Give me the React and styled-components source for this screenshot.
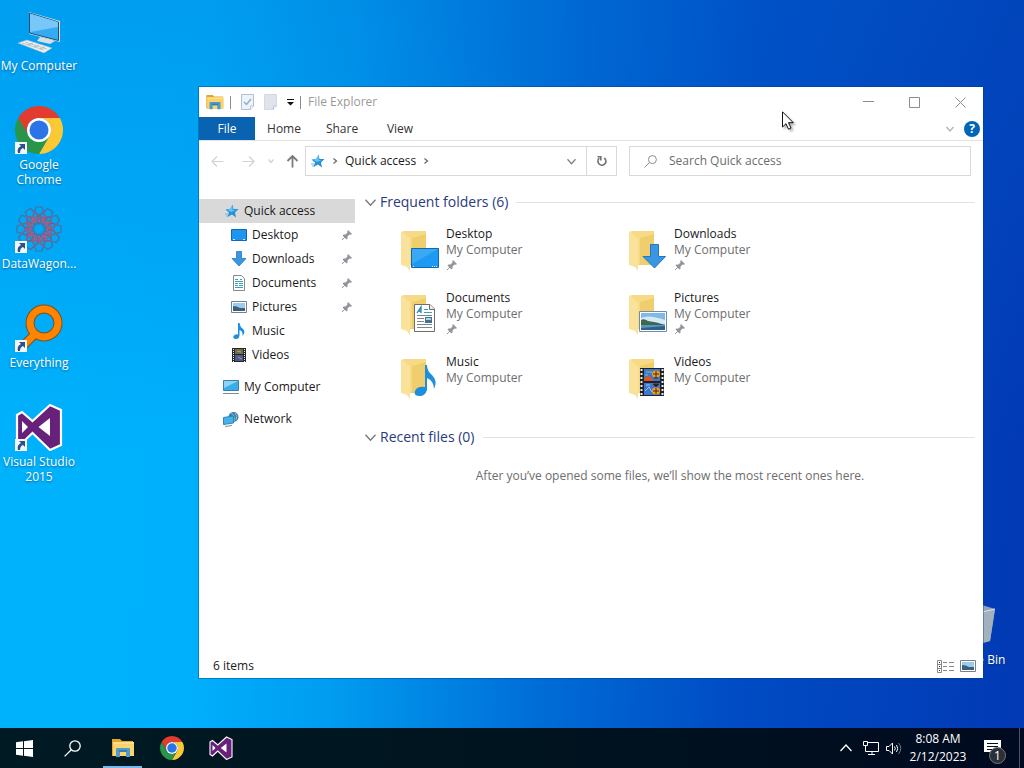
import React from 'react'
import styled, { createGlobalStyle } from 'styled-components'

const places = [
    { name: 'Desktop', pinned: true },
    { name: 'Downloads', pinned: true },
    { name: 'Documents', pinned: true },
    { name: 'Pictures', pinned: true },
    { name: 'Music', pinned: false },
    { name: 'Videos', pinned: false },
]

const shortcuts = [
    { name: 'My Computer', icon: <ComputerIcon /> },
    { name: 'Google Chrome', icon: <ChromeIcon />, link: true },
    { name: 'DataWagon...', icon: <WagonIcon />, link: true },
    { name: 'Everything', icon: <EverythingIcon />, link: true },
    { name: 'Visual Studio 2015', icon: <StudioIcon />, link: true },
]

export default function App() {
    return (
        <Screen>
            <GlobalStyle />
            <Desktop>
                <Shortcuts>
                    {shortcuts.map((s) => (
                        <Shortcut key={s.name}>
                            <ShortcutArt>
                                {s.icon}
                                {s.link && <LinkBadge><ArrowIcon /></LinkBadge>}
                            </ShortcutArt>
                            <span>{s.name}</span>
                        </Shortcut>
                    ))}
                </Shortcuts>
                <Bin>
                    <ShortcutArt><BinIcon /></ShortcutArt>
                    <span>Recycle Bin</span>
                </Bin>
                <Explorer />
                <Pointer><PointerIcon /></Pointer>
            </Desktop>
            <Taskbar />
        </Screen>
    )
}

function Explorer() {
    return (
        <Window>
            <TitleBar>
                <ExplorerIcon width="18" height="15" />
                <Divider />
                <PlainButton aria-label="Properties"><SheetIcon checked /></PlainButton>
                <PlainButton aria-label="New folder"><SheetIcon /></PlainButton>
                <PlainButton aria-label="Customize"><CustomizeIcon /></PlainButton>
                <Divider />
                <Title>File Explorer</Title>
                <Controls>
                    <Control aria-label="Minimize"><Line d="M0 4.5H11" /></Control>
                    <Control aria-label="Maximize"><Line d="M.5 .5H10.5V10.5H.5Z" /></Control>
                    <Control aria-label="Close"><Line d="M.5 .5L10.5 10.5M10.5 .5L.5 10.5" /></Control>
                </Controls>
            </TitleBar>
            <Ribbon>
                <FileTab>File</FileTab>
                <Tab>Home</Tab>
                <Tab>Share</Tab>
                <Tab>View</Tab>
                <RibbonEnd>
                    <PlainButton aria-label="Expand ribbon"><Chevron size={8} color="#b4b4b4" weight={1} /></PlainButton>
                    <Help aria-label="Help">?</Help>
                </RibbonEnd>
            </Ribbon>
            <AddressRow>
                <History>
                    <PlainButton aria-label="Back"><NavArrow color="#d2d2d2" /></PlainButton>
                    <ForwardButton aria-label="Forward"><NavArrow color="#d2d2d2" turn={180} /></ForwardButton>
                    <PlainButton aria-label="Recent"><Chevron size={6} color="#d2d2d2" weight={1} /></PlainButton>
                    <PlainButton aria-label="Up"><NavArrow color="#7a7a7a" turn={90} bold /></PlainButton>
                </History>
                <Address>
                    <StarIcon />
                    <Crumb><Chevron size={6} color="#6a6a6a" weight={1} turn={-90} /></Crumb>
                    <PlainButton>Quick access</PlainButton>
                    <Crumb><Chevron size={6} color="#6a6a6a" weight={1} turn={-90} /></Crumb>
                    <Drop aria-label="Previous locations"><Chevron size={9} color="#808080" weight={1} /></Drop>
                    <Refresh aria-label="Refresh"><RefreshIcon /></Refresh>
                </Address>
                <Search>
                    <LensIcon size={13} color="#8a8a8a" />
                    <input type="text" aria-label="Search Quick access" placeholder="Search Quick access" />
                </Search>
            </AddressRow>
            <Body>
                <Tree aria-label="Folders">
                    <Branch $active><StarIcon />Quick access</Branch>
                    {places.map((p) => (
                        <Leaf key={p.name}>
                            <SmallIcon name={p.name} />
                            <span>{p.name}</span>
                            {p.pinned && <PinIcon />}
                        </Leaf>
                    ))}
                    <Branch $spaced><MonitorIcon />My Computer</Branch>
                    <Branch $spaced><NetworkIcon />Network</Branch>
                </Tree>
                <Content>
                    <GroupHead>
                        <Chevron size={11} color="#777" weight={1} />
                        Frequent folders (6)
                        <Rule />
                    </GroupHead>
                    <Tiles>
                        {places.map((p) => (
                            <Tile key={p.name}>
                                <FolderIcon name={p.name} />
                                <TileText>
                                    <span>{p.name}</span>
                                    <Muted>My Computer</Muted>
                                    {p.pinned && <PinIcon />}
                                </TileText>
                            </Tile>
                        ))}
                    </Tiles>
                    <GroupHead>
                        <Chevron size={11} color="#777" weight={1} />
                        Recent files (0)
                        <Rule />
                    </GroupHead>
                    <Empty>After you’ve opened some files, we’ll show the most recent ones here.</Empty>
                </Content>
            </Body>
            <Status>
                <span>6 items</span>
                <Views>
                    <PlainButton aria-label="Details view"><DetailsIcon /></PlainButton>
                    <PlainButton aria-label="Large icons view"><SmallIcon name="Pictures" /></PlainButton>
                </Views>
            </Status>
        </Window>
    )
}

function Taskbar() {
    return (
        <Bar>
            <BarButton aria-label="Start">
                <svg width="17" height="17" viewBox="0 0 17 17" fill="#fff">
                    <path d="M0 2.3L7 1.3V8H0ZM8 1.2L17 0V8H8ZM0 9H7V15.7L0 14.7ZM8 9H17V17L8 15.8Z" />
                </svg>
            </BarButton>
            <BarButton aria-label="Search"><LensIcon size={17} color="#fff" /></BarButton>
            <Apps>
                <AppButton aria-label="File Explorer" $open><ExplorerIcon width="22" height="19" /></AppButton>
                <AppButton aria-label="Google Chrome"><ChromeIcon size={24} /></AppButton>
                <AppButton aria-label="Visual Studio 2015"><StudioIcon size={24} /></AppButton>
            </Apps>
            <Tray>
                <TrayButton aria-label="Show hidden icons"><Chevron size={12} color="#fff" weight={1} turn={180} /></TrayButton>
                <TrayButton aria-label="Network">
                    <svg width="17" height="14" viewBox="0 0 17 14" fill="none" stroke="#fff">
                        <path d="M6 1.5H16.5V10.5H3.5V6M10 10.5V13M6 13.5H13M1.5 .5H5.5V4.5H1.5ZM3.5 4.5V7" />
                    </svg>
                </TrayButton>
                <TrayButton aria-label="Volume">
                    <svg width="16" height="13" viewBox="0 0 16 13" fill="none" stroke="#fff">
                        <path d="M.5 4.5H3L6.5 1V12L3 8.5H.5ZM8.5 4.5Q10 6.5 8.5 8.5M10.5 3Q13 6.5 10.5 10" />
                        <path d="M12.5 1Q17 6.5 12.5 12" stroke="#707884" />
                    </svg>
                </TrayButton>
                <Clock><span>8:08 AM</span><span>2/12/2023</span></Clock>
                <Notice aria-label="1 notification">
                    <svg width="17" height="16" viewBox="0 0 17 16">
                        <path d="M0 0H17V12H10L6 16V12H0Z" fill="#fff" />
                        <path d="M3 3.5H14M3 6.5H14M3 9.5H10" stroke="#000c1c" />
                    </svg>
                    <Count>1</Count>
                </Notice>
                <ShowDesktop aria-label="Show desktop" />
            </Tray>
        </Bar>
    )
}

/* icons */

function Line({ d }) {
    return <svg width="11" height="11" viewBox="0 0 11 11" fill="none" stroke="#8c8c8c"><path d={d} /></svg>
}

function Chevron({ size, color, weight, turn = 0 }) {
    return (
        <svg width={size} height={size} viewBox={`0 0 ${size} ${size}`} fill="none" stroke={color} strokeWidth={weight + 0.3}>
            <path d={`M.5 ${size / 4}L${size / 2} ${size * 0.75}L${size - 0.5} ${size / 4}`} transform={`rotate(${turn} ${size / 2} ${size / 2})`} />
        </svg>
    )
}

function NavArrow({ color, turn = 0, bold }) {
    return (
        <svg width="13" height="13" viewBox="0 0 13 13" fill="none" stroke={color} strokeWidth={bold ? 1.8 : 1.2}>
            <path d="M12.5 6.5H1M6 1.5L1 6.5L6 11.5" transform={`rotate(${turn} 6.5 6.5)`} />
        </svg>
    )
}

function LensIcon({ size, color }) {
    return (
        <svg width={size} height={size} viewBox="0 0 17 17" fill="none" stroke={color} strokeWidth="1.3">
            <circle cx="11" cy="6" r="5.2" /><path d="M7.3 9.7L.6 16.4" />
        </svg>
    )
}

function RefreshIcon() {
    return (
        <svg width="12" height="12" viewBox="0 0 12 12" fill="none" stroke="#707070" strokeWidth="1.6">
            <path d="M8.3 3A4 4 0 1 1 3.3 3.2" /><path d="M1.5 1.8H4.8V5.5" />
        </svg>
    )
}

function SheetIcon({ checked }) {
    return (
        <svg width="13" height="16" viewBox="0 0 13 16">
            <path d="M.5 .5H12.5V12L9.5 15.5H.5Z" fill={checked ? '#eef3f9' : '#dfe4ec'} stroke={checked ? '#b3bfce' : '#d3d9e2'} />
            <path d="M9.5 15.5V12H12.5" fill="#fff" stroke="#b9c5d4" />
            {checked && <path d="M3 8L5.5 10.5L10 5" fill="none" stroke="#8eaed2" strokeWidth="1.5" />}
        </svg>
    )
}

function CustomizeIcon() {
    return <svg width="7" height="7" viewBox="0 0 7 7"><path d="M0 0H7V1H0ZM0 3H7L3.5 6.5Z" fill="#111" /></svg>
}

function ExplorerIcon({ width, height }) {
    return (
        <svg width={width} height={height} viewBox="0 0 22 19">
            <path d="M0 0H8L10 2H21V17H0Z" fill="#e3a52b" />
            <path d="M1 3H22V17H1Z" fill="#fcd36c" />
            <path d="M1 3H22V5H1Z" fill="#ffdf8a" />
            <path d="M4 18V10Q4 9 5 9H17Q18 9 18 10V18H14V13H8V18Z" fill="#4f9bc9" />
            <path d="M7 11H15V13H7Z" fill="#387fb0" />
        </svg>
    )
}

function ComputerIcon() {
    return (
        <svg width="48" height="48" viewBox="0 0 48 48">
            <path d="M14 5L45 14V35L14 27Z" fill="#d8e2ea" />
            <path d="M14.5 6L43.5 15V33.5L14.5 26Z" fill="#35aaf5" stroke="#23506f" />
            <path d="M15 6.5L43 15V20L15 25Z" fill="#77c8f8" />
            <path d="M25 30L34 32L40 34L35 37L22 34Z" fill="#d9e0e6" />
            <path d="M3 36L12 33L37 41L29 46Z" fill="#eef2f4" stroke="#a9b6c0" strokeWidth=".6" />
            <path d="M7 36L29 43M10 35L32 42M13 38L18 36M19 40L24 38M25 42L30 40" stroke="#a1aeb8" strokeWidth=".7" />
        </svg>
    )
}

function ChromeIcon({ size = 48 }) {
    return (
        <svg width={size} height={size} viewBox="0 0 48 48">
            <path d="M3.22 12A24 24 0 0 1 44.78 12H24A12 12 0 0 0 13.61 30Z" fill="#e33b2e" />
            <path d="M44.78 12A24 24 0 0 1 24 48L34.39 30A12 12 0 0 0 24 12Z" fill="#fcc934" />
            <path d="M24 48A24 24 0 0 1 3.22 12L13.61 30A12 12 0 0 0 34.39 30Z" fill="#299548" />
            <circle cx="24" cy="24" r="12" fill="#fff" />
            <circle cx="24" cy="24" r="9.5" fill="#2a74e8" />
        </svg>
    )
}

function WagonIcon() {
    return (
        <svg width="48" height="48" viewBox="0 0 48 48" fill="none" strokeWidth="1.2">
            {[0, 30, 60, 90, 120, 150, 180, 210, 240, 270, 300, 330].map((a) => (
                <g key={a} transform={`rotate(${a} 24 24)`}>
                    <path d="M18 12L21 2H27L30 12L24 19Z" stroke="#4a6f9f" />
                    <path d="M18 6L30 14M30 6L18 14" stroke="#7a6894" />
                    <path d="M20 18L24 11L28 18" stroke="#a2608c" />
                    <circle cx="24" cy="14" r=".8" fill="#c2506f" stroke="#c2506f" />
                </g>
            ))}
        </svg>
    )
}

function EverythingIcon() {
    return (
        <svg width="48" height="48" viewBox="0 0 48 48" fill="none">
            <path d="M19 31L6 44" stroke="#7a5020" strokeWidth="9" />
            <circle cx="29" cy="19" r="14" stroke="#7a5020" strokeWidth="9" />
            <path d="M20 30L6 44" stroke="#ff8400" strokeWidth="7" />
            <circle cx="29" cy="19" r="14" stroke="#ff8400" strokeWidth="7" />
        </svg>
    )
}

function StudioIcon({ size = 48 }) {
    return (
        <svg width={size} height={size} viewBox="0 0 48 48">
            <path d="M2 12L7 9L17.5 18L35 2L46 7V42L35 47L17.5 30L7 40L2 37Z" fill="#68217a" stroke="#fff" strokeWidth="2.2" />
            <path d="M7 18L13 24L7 30ZM23.5 24L35 15V33Z" fill="#fff" />
        </svg>
    )
}

function ArrowIcon() {
    return (
        <svg width="12" height="12" viewBox="0 0 12 12">
            <path d="M4 2H10V8L8 6Q5 7 5 11H3Q1.5 6 6 4Z" fill="#2b4f8f" />
        </svg>
    )
}

function BinIcon() {
    return (
        <svg width="48" height="48" viewBox="0 0 48 48">
            <path d="M6 7L32 4L45 8L40 40L14 44Z" fill="#8fa3b8" />
            <path d="M32 11L45 8L40 40L30 43Z" fill="#a3b0bd" />
            <path d="M6 7L32 11L45 8" fill="none" stroke="#dbe6f0" />
        </svg>
    )
}

function PointerIcon() {
    return (
        <svg width="12" height="19" viewBox="0 0 12 19">
            <path d="M.5 .8V16L4 12.7L6.5 18.2L9 17L6.5 11.7H11.3Z" fill="#fff" stroke="#111" />
        </svg>
    )
}

function StarIcon() {
    return (
        <svg width="16" height="16" viewBox="0 0 16 16">
            <path d="M9.5 1.5L10.5 6L15.5 6L12 9.5L13 14.5L9 11.5L4.5 14L6 9.5L2.5 6.5L7.5 6Z" fill="#2492d6" />
            <path d="M9.5 3L9.7 7L13 7L8 9L5 7.3Z" fill="#63c3f2" />
            <path d="M2 11H5M3 13H5" stroke="#6db9e6" />
        </svg>
    )
}

function PinIcon() {
    return (
        <svg width="12" height="12" viewBox="0 0 12 12">
            <path d="M7 1L11 5L10 5.7L8.5 5.5L6.5 7.5V9.5L5.5 10.5L1.5 6.5L2.5 5.5H4.5L6.5 3.5L6.3 2Z" fill="#8f959a" />
            <path d="M4 8L1 11" stroke="#8f959a" />
        </svg>
    )
}

function MonitorIcon() {
    return (
        <svg width="16" height="16" viewBox="0 0 16 16">
            <path d="M.5 1.5H15.5V11.5H.5Z" fill="#3aaeea" stroke="#3f7fa6" />
            <path d="M1 2H15L1 9Z" fill="#8bd3f7" />
            <path d="M0 14.5H16" stroke="#7d8f9c" />
        </svg>
    )
}

function NetworkIcon() {
    return (
        <svg width="16" height="16" viewBox="0 0 16 16">
            <circle cx="10.5" cy="6" r="5" fill="#3d7fae" />
            <path d="M8 2Q12 4 11 10M12 2Q15 5 13 9" stroke="#8bc0e0" fill="none" />
            <path d="M.5 6.5L10.5 5V12L.5 13.5Z" fill="#42b3ec" stroke="#3a82ac" />
            <path d="M2 15.5L9 14.5" stroke="#7d8f9c" />
        </svg>
    )
}

function DetailsIcon() {
    return (
        <svg width="17" height="13" viewBox="0 0 17 13" fill="none" stroke="#888">
            <path d="M.5 .5H4.5V12.5H.5ZM.5 4.5H4.5M.5 8.5H4.5" />
            <path d="M6 2.5H10M12 2.5H17M6 6.5H10M12 6.5H17M6 10.5H10M12 10.5H17" />
            <path d="M2 2.5H3M2 6.5H3M2 10.5H3" stroke="#222" />
        </svg>
    )
}

function SmallIcon({ name }) {
    const art = {
        Desktop: (
            <>
                <path d="M.5 2.5H15.5V13.5H.5Z" fill="#1e95ee" stroke="#1267ae" />
                <path d="M2 12.5H4M12 12.5H14" stroke="#cbe8ff" />
            </>
        ),
        Downloads: <path d="M5.5 .5H10.5V7.5H15L8 15L1 7.5H5.5Z" fill="#3a96e0" stroke="#2678bd" strokeWidth=".8" />,
        Documents: (
            <>
                <path d="M2.5 .5H10.5L13.5 3.5V15.5H2.5Z" fill="#fff" stroke="#878787" />
                <path d="M4 4.5H7M9 4.5H11M4 6.5H12M4 8.5H7M8 8.5H12M4 10.5H7M8 10.5H12M4 12.5H12" stroke="#3c9fb5" />
            </>
        ),
        Pictures: (
            <>
                <path d="M.5 2.5H15.5V13.5H.5Z" fill="#fff" stroke="#76818c" />
                <path d="M2 4H14V12H2Z" fill="#9ccbee" />
                <path d="M2 7Q6 7 9 9H14V12H2Z" fill="#3b5f7c" />
            </>
        ),
        Music: <path d="M7 0H8.5Q9 4 12 6Q15 9 11.5 13Q12 8 8.5 7V12.5Q8 16 5 16Q1.5 16 2.5 13Q4.5 10.5 7 11.5Z" fill="#1d8fdf" />,
        Videos: (
            <>
                <path d="M1 1H15V15H1Z" fill="#26272a" />
                <path d="M4 2H12V7H4Z" fill="#6b704f" /><path d="M4 8H12V14H4Z" fill="#4b5b94" />
                <path d="M2.5 2V15M13.5 2V15" stroke="#eee" strokeDasharray="1 1" />
                <path d="M6 4L10 5M7 10L11 12" stroke="#c7a742" />
            </>
        ),
    }
    return <svg width="16" height="16" viewBox="0 0 16 16">{art[name]}</svg>
}

function FolderIcon({ name }) {
    const art = {
        Desktop: (
            <>
                <path d="M11.5 18.5H38.5V37.5H11.5Z" fill="#1f9af2" stroke="#1268ad" />
                <path d="M12 19H38L12 34Z" fill="#39a9f6" />
                <path d="M13 36.5H15M32 36.5H37" stroke="#d7efff" strokeDasharray="1 1" />
            </>
        ),
        Downloads: <path d="M22.5 14.5H30.5V26.5H37.5L26.5 38L15 26.5H22.5Z" fill="#3797e3" stroke="#2678bd" />,
        Documents: (
            <>
                <path d="M14.5 10.5H30L34.5 15V37.5H14.5Z" fill="#fff" stroke="#6d6d6d" />
                <path d="M29.5 10.5V15.5H34.5" fill="#eee" stroke="#6d6d6d" />
                <path d="M17 19L21 13V19M18 17H21" stroke="#1c84be" fill="none" strokeWidth="1.3" />
                <path d="M24 15.5H28M24 18.5H32" stroke="#3a9cc7" />
                <path d="M17 21.5H32M17 24.5H24M17 27.5H24M17 30.5H32M17 33.5H32" stroke="#7d868c" />
                <path d="M25 23H32V29H25Z" fill="#45738a" /><path d="M26 24H31V26H26Z" fill="#a9d4e6" />
            </>
        ),
        Pictures: (
            <>
                <path d="M11.5 17.5H38.5V37.5H11.5Z" fill="#fff" stroke="#6f8ea5" />
                <path d="M13 19H37V36H13Z" fill="#7eb9ea" />
                <path d="M13 24Q20 20 37 26V30H13Z" fill="#d5eaf5" />
                <path d="M13 26Q16 24 20 27Q29 28 37 31H13Z" fill="#3d6850" />
                <path d="M13 31H37V36H13Z" fill="#5c96c0" /><path d="M13 34L37 32V36H13Z" fill="#2f618f" />
            </>
        ),
        Music: <path d="M25 7H27Q27 13 32 17Q38 23 34 31Q34 23 27 20V32Q25 38 20 38Q13 38 15 33Q17 28 25 29Z" fill="#1e8fdc" />,
        Videos: (
            <>
                <path d="M12 10H36V38H12Z" fill="#202124" />
                <path d="M16 11H32V23H16ZM16 25H32V37H16Z" fill="#3c78cf" />
                <path d="M13.5 11V38M34.5 11V38" stroke="#ececec" strokeWidth="2" strokeDasharray="2 2" />
                <path d="M16 21Q20 14 26 23H16Z" fill="#d4572b" />
                <path d="M18 14H24M17 17H20" stroke="#8ebc86" fill="none" />
                <ellipse cx="28" cy="16" rx="4" ry="3.5" fill="#eba420" />
                <ellipse cx="28" cy="33" rx="4" ry="3.5" fill="#eba420" />
                <path d="M25 16H31M28 13V20M26 20H30M25 26H31L28 29ZM25 33H31M28 30V36" stroke="#55220e" fill="#2a1c1c" />
                <path d="M17 33L21 29L24 34M18 27H22" stroke="#9fc4f2" fill="none" />
            </>
        ),
    }
    return (
        <svg width="42" height="42" viewBox="0 0 42 42">
            <path d="M3 1H26V35H8Z" fill="#f1ce6d" />
            <path d="M3 1H26V4L12 8V34L8 35Z" fill="#f6da86" />
            <path d="M1 1L10 8V41L7 37L1 35Z" fill="#fae29a" />
            {art[name]}
        </svg>
    )
}

const GlobalStyle = createGlobalStyle`
    body {
        margin: 0;
        overflow: hidden;
    }

    * {
        box-sizing: border-box;
    }

    button, input {
        font: inherit;
        color: inherit;
        border: 0;
        padding: 0;
        margin: 0;
        background: none;
    }

    svg {
        display: block;
        flex: none;
    }
`

const Screen = styled.div`
    display: flex;
    flex-direction: column;
    height: 100vh;
    font-family: "Open Sans", "Noto Sans", sans-serif;
    font-size: 12px;
    line-height: 16px;
    color: #1a1a1a;
    background:
        linear-gradient(180deg, rgb(0 100 205 / 25%), rgb(0 110 215 / 0%) 60%),
        linear-gradient(92deg, #00b2fc 0%, #00b0fc 20%, #009cf0 34%, #006cd6 54%, #004cc4 72%, #0239b4 100%);
`

const Desktop = styled.main`
    position: relative;
    flex: 1;
`

const Shortcuts = styled.div`
    display: flex;
    flex-direction: column;
    align-items: flex-start;
    padding-top: 5px;
`

const Shortcut = styled.button`
    display: flex;
    flex-direction: column;
    align-items: center;
    gap: 3px;
    width: 78px;
    height: 99px;
    padding-top: 2px;
    line-height: 15px;
    color: #fff;
    text-shadow: 0 1px 2px rgb(0 40 90 / 50%);
`

const Bin = styled(Shortcut)`
    position: absolute;
    right: 11px;
    bottom: 30px;
`

const ShortcutArt = styled.span`
    position: relative;
`

const LinkBadge = styled.span`
    position: absolute;
    left: 0;
    bottom: 0;
    background: #f4f6f8;
`

const Pointer = styled.div`
    position: absolute;
    left: 782px;
    top: 111px;
    filter: drop-shadow(2px 2px 1px rgb(0 0 0 / 30%));
`

const Window = styled.section`
    position: absolute;
    top: 87px;
    right: 41px;
    bottom: 50px;
    left: 199px;
    display: flex;
    flex-direction: column;
    background: #fff;
    box-shadow: 0 0 0 1px rgb(0 60 130 / 40%);
`

const TitleBar = styled.header`
    display: flex;
    align-items: center;
    gap: 10px;
    height: 30px;
    padding-left: 7px;
`

const Divider = styled.span`
    width: 1px;
    height: 13px;
    margin-left: -4px;
    background: #8c8c8c;
`

const Title = styled.span`
    margin-left: -3px;
    color: #999;
`

const Controls = styled.div`
    display: flex;
    margin-left: auto;
`

const PlainButton = styled.button`
    display: flex;
    align-items: center;
`

const ForwardButton = styled(PlainButton)`
    padding-left: 6px;
`

const Control = styled.button`
    display: flex;
    justify-content: center;
    width: 46px;
`

const Ribbon = styled.nav`
    display: flex;
    height: 24px;
    border-bottom: 1px solid #e2e2e2;
`

const Tab = styled.button`
    width: 58px;
    color: #333;
`

const FileTab = styled(Tab)`
    width: 56px;
    color: #fff;
    background: #0a63b1;
`

const RibbonEnd = styled.div`
    display: flex;
    align-items: center;
    gap: 10px;
    margin-left: auto;
    padding-right: 3px;
`

const Help = styled.button`
    width: 16px;
    height: 16px;
    border-radius: 50%;
    background: #0067b8;
    color: #fff;
    font-weight: bold;
`

const AddressRow = styled.div`
    display: flex;
    height: 30px;
    margin-top: 5px;
    padding-right: 12px;
`

const History = styled.div`
    display: flex;
    align-items: center;
    justify-content: space-between;
    width: 106px;
    padding: 0 6px 0 12px;
`

const Address = styled.div`
    display: flex;
    align-items: center;
    flex: 312 1 312px;
    padding-left: 3px;
    border: 1px solid #d9d9d9;
`

const Crumb = styled.span`
    padding: 0 7px;
`

const Drop = styled.button`
    margin-left: auto;
    padding: 0 10px;
`

const Refresh = styled.button`
    display: flex;
    align-items: center;
    justify-content: center;
    width: 30px;
    height: 100%;
    border-left: 1px solid #d9d9d9;
`

const Search = styled.label`
    display: flex;
    align-items: center;
    gap: 12px;
    flex: 342 1 342px;
    margin-left: 12px;
    padding-left: 14px;
    border: 1px solid #d9d9d9;

    input {
        flex: 1;
        min-width: 0;
        outline: 0;
    }

    input::placeholder {
        color: #6d6d6d;
        opacity: 1;
    }
`

const Body = styled.div`
    display: flex;
    flex: 1;
    min-height: 0;
`

const Tree = styled.nav`
    width: 156px;
    padding-top: 23px;
`

const Branch = styled.button`
    display: flex;
    align-items: center;
    gap: 5px;
    width: 100%;
    height: 24px;
    margin-top: ${(props) => (props.$spaced ? '8px' : '0')};
    padding-left: 24px;
    background: ${(props) => (props.$active ? '#d9d9d9' : 'none')};
`

const Leaf = styled(Branch)`
    padding-left: 32px;
    padding-right: 2px;

    span {
        flex: 1;
        text-align: left;
    }
`

const Content = styled.div`
    flex: 1;
    padding: 16px 8px 0 10px;
`

const GroupHead = styled.h2`
    display: flex;
    align-items: center;
    gap: 4px;
    height: 20px;
    margin: 0;
    font-size: 14px;
    font-weight: normal;
    color: #2a3a7c;
`

const Rule = styled.span`
    flex: 1;
    height: 1px;
    margin-left: 4px;
    background: #e2e2e2;
`

const Tiles = styled.div`
    display: grid;
    grid-template-columns: repeat(auto-fill, 228px);
    padding: 14px 100px 9px 35px;
`

const Tile = styled.button`
    display: flex;
    gap: 4px;
    height: 64px;
    text-align: left;

    > svg {
        margin-top: 4px;
    }
`

const TileText = styled.span`
    display: flex;
    flex-direction: column;

    svg {
        margin-top: 1px;
    }
`

const Muted = styled.span`
    color: #6d6d6d;
`

const Empty = styled.p`
    margin: 21px 0;
    text-align: center;
    color: #6d6d6d;
`

const Status = styled.footer`
    display: flex;
    align-items: center;
    justify-content: space-between;
    height: 24px;
    padding: 0 7px 0 14px;
`

const Views = styled.div`
    display: flex;
    align-items: center;
    gap: 6px;
`

const Bar = styled.footer`
    display: flex;
    height: 40px;
    color: #fff;
    background: linear-gradient(90deg, #001a24, #00141f 50%, #000a20);
`

const BarButton = styled.button`
    display: flex;
    align-items: center;
    justify-content: center;
    width: 48px;
`

const Apps = styled.div`
    display: flex;
    margin-left: 2px;
`

const AppButton = styled(BarButton)`
    width: 39px;
    margin: 0 5px;
    border-top: 2px solid transparent;
    border-bottom: 2px solid ${(props) => (props.$open ? '#76b9ed' : 'transparent')};
`

const Tray = styled.div`
    display: flex;
    margin-left: auto;
`

const TrayButton = styled(BarButton)`
    width: 24px;
`

const Clock = styled.button`
    display: flex;
    flex-direction: column;
    align-items: center;
    justify-content: center;
    width: 64px;
    line-height: 18px;
`

const Notice = styled(BarButton)`
    position: relative;
    width: 45px;
    margin-right: 4px;
`

const Count = styled.span`
    position: absolute;
    right: 9px;
    bottom: 4px;
    width: 17px;
    height: 17px;
    border: 1px solid #777;
    border-radius: 50%;
    background: #2b3038;
    line-height: 15px;
`

const ShowDesktop = styled.button`
    width: 5px;
    border-left: 1px solid #4a5260;
`
